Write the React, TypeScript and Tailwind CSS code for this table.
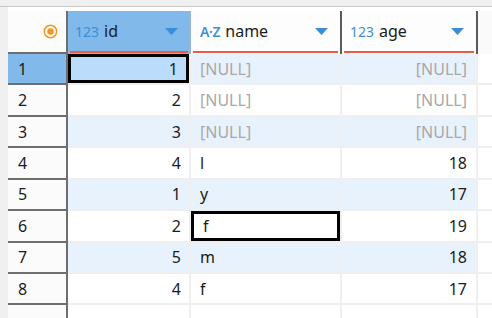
import React from "react";

type Row = { id: number; name: string | null; age: number | null };

const rows: Row[] = [
  { id: 1, name: null, age: null },
  { id: 2, name: null, age: null },
  { id: 3, name: null, age: null },
  { id: 4, name: "l", age: 18 },
  { id: 1, name: "y", age: 17 },
  { id: 2, name: "f", age: 19 },
  { id: 5, name: "m", age: 18 },
  { id: 4, name: "f", age: 17 },
];

const font = { fontFamily: '"Noto Sans", "Open Sans", sans-serif' };

function Caret() {
  return (
    <svg width="13" height="7" viewBox="0 0 13 7" className="shrink-0">
      <path d="M0 0 L13 0 L6.5 7 Z" fill="#3a8ed9" />
    </svg>
  );
}

function Radio() {
  return (
    <svg width="15" height="15" viewBox="0 0 15 15">
      <circle cx="7.5" cy="7.5" r="6.2" fill="none" stroke="#f5961c" strokeWidth="1.5" />
      <circle cx="7.5" cy="7.5" r="3.2" fill="#f5961c" />
    </svg>
  );
}

function Null({ right }: { right?: boolean }) {
  return (
    <span className={`text-[#a8a8a8] ${right ? "ml-auto" : ""}`}>[NULL]</span>
  );
}

export default function App() {
  return (
    <div
      className="flex h-[318px] w-[492px] flex-col overflow-hidden bg-[#f0f0f0] text-[16px] text-[#1b1b1b]"
      style={font}
    >
      <div className="h-[6px] shrink-0" />
      <div className="h-px shrink-0 bg-[#c9c9c9]" />
      <div className="flex min-h-0 flex-1">
        <div className="w-[8px] shrink-0" />
        <div className="flex min-w-0 flex-1 flex-col bg-white pt-[4px]">
          {/* header */}
          <div className="flex h-[43px] shrink-0">
            <div className="flex w-[60px] shrink-0 items-center justify-end border-r-2 border-b-2 border-[#6e6e6e] bg-[#fcfcfc] pr-[8px]">
              <Radio />
            </div>
            <div className="flex w-[123px] shrink-0 flex-col border-r border-[#9fb7cc] bg-[#80b9ea]">
              <div className="flex flex-1 items-center pl-[7px] pr-[12px]">
                <span className="mr-[5px] text-[14px] text-[#3f8fd6]">123</span>
                <span>id</span>
                <span className="flex-1" />
                <Caret />
              </div>
              <div className="mx-[2px] mb-px h-[2px] bg-[#ef5a42]" />
            </div>
            <div className="flex w-[151px] shrink-0 flex-col border-r-2 border-[#5b5b5b] bg-[#fdfdfd]">
              <div className="flex flex-1 items-center pl-[9px] pr-[12px]">
                <span className="mr-[5px] text-[14px] font-semibold tracking-tight text-[#3f8fd6]">
                  A·Z
                </span>
                <span>name</span>
                <span className="flex-1" />
                <Caret />
              </div>
              <div className="mx-[2px] mb-px h-[2px] bg-[#ef5a42]" />
            </div>
            <div className="flex w-[136px] shrink-0 flex-col border-r-2 border-[#5b5b5b] bg-[#fdfdfd]">
              <div className="flex flex-1 items-center pl-[8px] pr-[12px]">
                <span className="mr-[5px] text-[14px] text-[#3f8fd6]">123</span>
                <span>age</span>
                <span className="flex-1" />
                <Caret />
              </div>
              <div className="mx-[2px] mb-px h-[2px] bg-[#ef5a42]" />
            </div>
            <div className="flex-1 bg-[#fafafa]" />
          </div>

          {/* rows */}
          {rows.map((r, i) => {
            const odd = i % 2 === 0;
            const bg = odd ? "bg-[#e8f2fd]" : "bg-white";
            return (
              <div key={i} className="flex h-[31.43px] shrink-0">
                <div
                  className={`flex w-[60px] shrink-0 items-center border-r-2 border-b-2 border-[#6e6e6e] pl-[10px] ${
                    i === 0 ? "bg-[#80b9ea]" : "bg-[#fbfbfb]"
                  }`}
                >
                  {i + 1}
                </div>
                <div className={`flex w-[123px] shrink-0 border-r-2 border-b-2 border-[#efefef] ${bg}`}>
                  <div
                    className={`flex flex-1 items-center justify-end pr-[8px] ${
                      i === 0 ? "border-[3px] border-black bg-[#bcdcfb] pr-[5px]" : ""
                    }`}
                  >
                    {r.id}
                  </div>
                </div>
                <div className={`flex w-[151px] shrink-0 border-r-2 border-b-2 border-[#efefef] ${bg}`}>
                  <div
                    className={`flex flex-1 items-center pl-[9px] ${
                      i === 5 ? "border-[3px] border-black bg-white pl-[6px]" : ""
                    }`}
                  >
                    {r.name === null ? <Null /> : r.name}
                  </div>
                </div>
                <div
                  className={`flex w-[136px] shrink-0 items-center justify-end border-r-2 border-b-2 border-[#efefef] pr-[9px] ${bg}`}
                >
                  {r.age === null ? <Null right /> : r.age}
                </div>
                <div className="flex-1 border-b-2 border-[#efefef] bg-white" />
              </div>
            );
          })}

          {/* empty space below */}
          <div className="flex flex-1">
            <div className="w-[60px] shrink-0 border-r-2 border-[#6e6e6e] bg-[#fbfbfb]" />
            <div className="w-[123px] shrink-0 border-r-2 border-[#efefef]" />
            <div className="w-[151px] shrink-0 border-r-2 border-[#efefef]" />
            <div className="w-[136px] shrink-0 border-r-2 border-[#efefef]" />
            <div className="flex-1" />
          </div>
        </div>
      </div>
    </div>
  );
}
